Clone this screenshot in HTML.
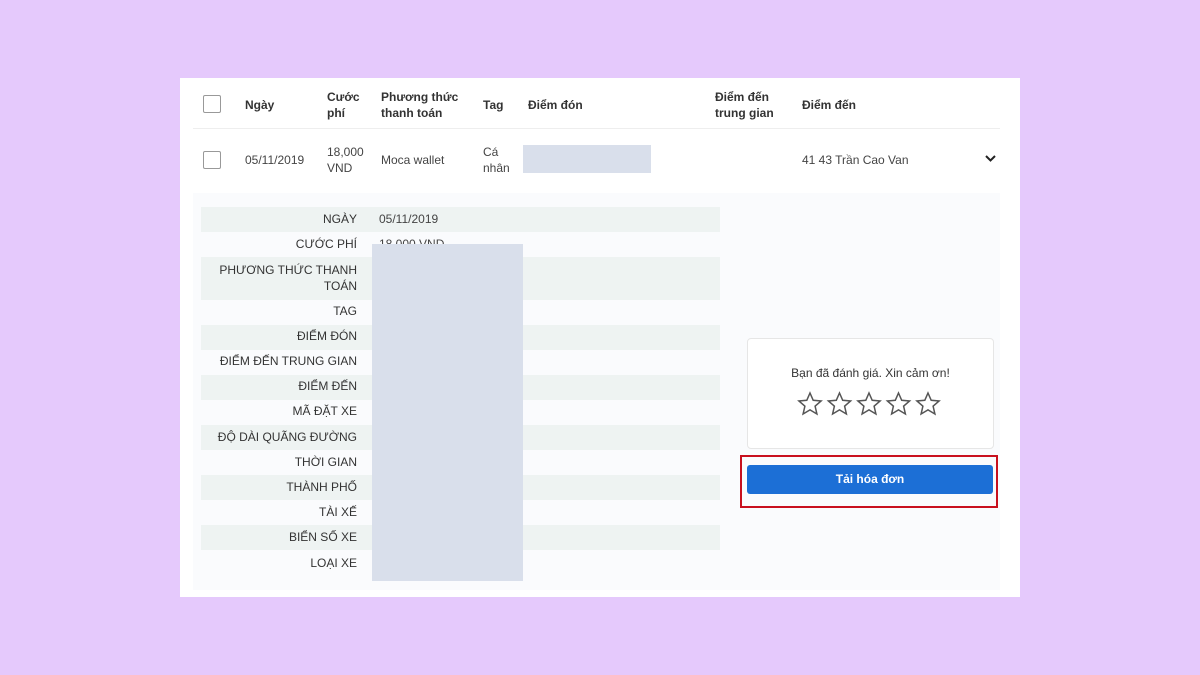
<!DOCTYPE html>
<html><head><meta charset="utf-8"><style>
body{margin:0;width:1200px;height:675px;background:#e5c9fc;position:relative;font-family:"Liberation Sans",sans-serif;overflow:hidden}
.card{position:absolute;left:180px;top:78px;width:840px;height:519px;background:#fff}
.a{position:absolute;color:#444;font-size:12px;line-height:16px}
.h{font-weight:bold;color:#333}
.cb{position:absolute;width:16px;height:16px;border:1px solid #999;border-radius:2px}
.det{position:absolute;left:193px;top:193px;width:807px;height:397px;background:#fafbfd}
.st{position:absolute;left:201px;width:519px;background:#eef3f2}
.lb{position:absolute;right:843px;font-size:12px;color:#333;text-align:right;line-height:16px}
</style></head><body>
<div class="card"></div>
<div style="position:absolute;left:193px;top:128px;width:807px;height:1px;background:#eee"></div>
<div class="cb" style="left:203px;top:95px"></div>
<div class="cb" style="left:203px;top:151px"></div>
<div class="a h" style="left:245px;top:97px">Ngày</div>
<div class="a h" style="left:327px;top:89px">Cước<br>phí</div>
<div class="a h" style="left:381px;top:89px">Phương thức<br>thanh toán</div>
<div class="a h" style="left:483px;top:97px">Tag</div>
<div class="a h" style="left:528px;top:97px">Điểm đón</div>
<div class="a h" style="left:715px;top:89px">Điểm đến<br>trung gian</div>
<div class="a h" style="left:802px;top:97px">Điểm đến</div>
<div class="a" style="left:245px;top:152px">05/11/2019</div>
<div class="a" style="left:327px;top:144px">18,000<br>VND</div>
<div class="a" style="left:381px;top:152px">Moca wallet</div>
<div class="a" style="left:483px;top:144px">Cá<br>nhân</div>
<div style="position:absolute;left:523px;top:145px;width:128px;height:28px;background:#d9dfeb"></div>
<div class="a" style="left:802px;top:152px">41 43 Trần Cao Van</div>
<svg style="position:absolute;left:984px;top:154px" width="13" height="10"><path d="M2 2l4.5 4.5L11 2" stroke="#222" stroke-width="2" fill="none"/></svg>
<div class="det"></div>
<div class="st" style="top:207px;height:25px"></div>
<div class="st" style="top:257px;height:43px"></div>
<div class="st" style="top:325px;height:25px"></div>
<div class="st" style="top:375px;height:25px"></div>
<div class="st" style="top:425px;height:25px"></div>
<div class="st" style="top:475px;height:25px"></div>
<div class="st" style="top:525px;height:25px"></div>
<div class="lb" style="top:211px">NGÀY</div>
<div class="lb" style="top:236px">CƯỚC PHÍ</div>
<div class="lb" style="top:262px">PHƯƠNG THỨC THANH<br>TOÁN</div>
<div class="lb" style="top:303px">TAG</div>
<div class="lb" style="top:328px">ĐIỂM ĐÓN</div>
<div class="lb" style="top:353px">ĐIỂM ĐẾN TRUNG GIAN</div>
<div class="lb" style="top:378px">ĐIỂM ĐẾN</div>
<div class="lb" style="top:403px">MÃ ĐẶT XE</div>
<div class="lb" style="top:429px">ĐỘ DÀI QUÃNG ĐƯỜNG</div>
<div class="lb" style="top:454px">THỜI GIAN</div>
<div class="lb" style="top:479px">THÀNH PHỐ</div>
<div class="lb" style="top:504px">TÀI XẾ</div>
<div class="lb" style="top:529px">BIỂN SỐ XE</div>
<div class="lb" style="top:555px">LOẠI XE</div>
<div class="a" style="left:379px;top:211px">05/11/2019</div>
<div class="a" style="left:379px;top:236px">18,000 VND</div>
<div style="position:absolute;left:372px;top:244px;width:151px;height:337px;background:#d9dfeb"></div>
<div style="position:absolute;left:747px;top:338px;width:245px;height:109px;background:#fff;border:1px solid #e6e6e6;border-radius:4px"></div>
<div class="a" style="left:747px;top:365px;width:247px;text-align:center;color:#333">Bạn đã đánh giá. Xin cảm ơn!</div>
<svg style="position:absolute;left:797px;top:391px" width="146" height="28">
<g fill="none" stroke="#555" stroke-width="1.5">
<path id="s" d="M13 2l3.2 7.3 7.9.7-6 5.2 1.8 7.8L13 18.9 6.1 23l1.8-7.8-6-5.2 7.9-.7z"/>
<use href="#s" x="29.5"/><use href="#s" x="59"/><use href="#s" x="88.5"/><use href="#s" x="118"/>
</g></svg>
<div style="position:absolute;left:740px;top:455px;width:254px;height:49px;border:2px solid #c8101e"></div>
<div style="position:absolute;left:747px;top:465px;width:246px;height:29px;background:#1c6fd6;border-radius:3px;color:#fff;font-weight:bold;font-size:12px;line-height:29px;text-align:center">Tải hóa đơn</div>
</body></html>
